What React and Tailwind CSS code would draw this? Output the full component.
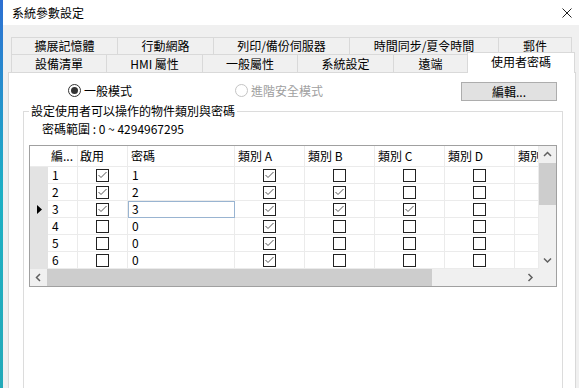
import React from "react";

const backTabs = [
  { label: "擴展記憶體", w: "w-[106px]" },
  { label: "行動網路", w: "w-[96px]" },
  { label: "列印/備份伺服器", w: "w-[136px]" },
  { label: "時間同步/夏令時間", w: "w-[149px]" },
  { label: "郵件", w: "w-[74px] border-r" },
];

const frontTabs = [
  { label: "設備清單", w: "w-[95px]" },
  { label: "HMI 屬性", w: "w-[96px]" },
  { label: "一般屬性", w: "w-[95px]" },
  { label: "系統設定", w: "w-[96px]" },
  { label: "遠端", w: "w-[74px]" },
];

const catCols = [
  { label: "類別 A", w: "w-[70px]" },
  { label: "類別 B", w: "w-[70px]" },
  { label: "類別 C", w: "w-[70px]" },
  { label: "類別 D", w: "w-[70px]" },
  { label: "類別 E", w: "w-[24px]" },
];

const rows = [
  { n: 1, on: true, pw: "1", cats: [true, false, false, false] },
  { n: 2, on: true, pw: "2", cats: [true, true, false, false] },
  { n: 3, on: true, pw: "3", cats: [true, true, true, false], current: true },
  { n: 4, on: false, pw: "0", cats: [true, false, false, false] },
  { n: 5, on: false, pw: "0", cats: [true, false, false, false] },
  { n: 6, on: false, pw: "0", cats: [true, false, false, false] },
];

const CheckBox = ({ checked }) => (
  <div className="w-[13px] h-[13px] border border-[#222222] bg-white flex items-center justify-center">
    {checked && (
      <svg width="11" height="11" viewBox="0 0 11 11">
        <polyline points="1.5,5 4,7.5 9.5,2" fill="none" stroke="#555555" strokeWidth="1" />
      </svg>
    )}
  </div>
);

const Chevron = ({ dir }) => {
  const pts = {
    up: "1,5 4.5,1.5 8,5",
    down: "1,1.5 4.5,5 8,1.5",
    left: "5,1 1.5,4.5 5,8",
    right: "1.5,1 5,4.5 1.5,8",
  }[dir];
  const size = dir === "up" || dir === "down" ? [9, 7] : [7, 9];
  return (
    <svg width={size[0]} height={size[1]} viewBox={`0 0 ${size[0]} ${size[1]}`}>
      <polyline points={pts} fill="none" stroke="#606060" strokeWidth="1.5" />
    </svg>
  );
};

const cell = "h-full border-r border-b border-[#ebebeb] flex items-center";

export default function App() {
  return (
    <div className="flex w-[579px] h-[388px] overflow-hidden bg-[#f0f0f0] text-[12px] leading-[16px] text-black font-['Microsoft_JhengHei','Noto_Sans_CJK_TC',sans-serif]">
      {/* desktop peeking through on the left */}
      <div className="w-[3px] shrink-0 bg-gradient-to-b from-[#2d6fd2] via-[#1fb0c4] to-[#23a9b8]" />

      <div className="flex flex-1 flex-col">
        {/* title bar */}
        <div className="h-[25px] shrink-0 bg-white flex items-center justify-between pl-[9px] pr-[7px]">
          <span>系統參數設定</span>
          <svg width="10" height="10" viewBox="0 0 10 10">
            <path d="M0.5 0.5 L9.5 9.5 M9.5 0.5 L0.5 9.5" stroke="#222" strokeWidth="1" />
          </svg>
        </div>

        {/* tabs */}
        <div className="pt-[12px] shrink-0">
          <div className="flex ml-[8px] h-[17px]">
            {backTabs.map((t) => (
              <div
                key={t.label}
                className={`${t.w} h-full flex items-center justify-center border-t border-l border-[#d9d9d9] bg-[#f0f0f0]`}
              >
                {t.label}
              </div>
            ))}
          </div>
          <div className="flex items-end ml-[8px] h-[18px]">
            {frontTabs.map((t) => (
              <div
                key={t.label}
                className={`${t.w} h-full flex items-center justify-center border-t border-l border-[#d9d9d9] bg-[#f0f0f0]`}
              >
                {t.label}
              </div>
            ))}
            <div className="relative z-10 w-[108px] h-[21px] -mb-px flex items-center justify-center border-t border-l border-r border-[#d9d9d9] bg-white pb-[2px]">
              使用者密碼
            </div>
          </div>
        </div>

        {/* tab page */}
        <div className="ml-[5px] w-[568px] h-[400px] shrink-0 border border-[#d9d9d9] bg-white">
          <div className="flex items-center mt-[9px] h-[19px] ml-[59px] mr-[18px]">
            <div className="flex items-center w-[167px] gap-[3px] -mt-[2px]">
              <div className="w-[13px] h-[13px] rounded-full border border-[#333333] flex items-center justify-center">
                <div className="w-[7px] h-[7px] rounded-full bg-[#333333]" />
              </div>
              <span>一般模式</span>
            </div>
            <div className="flex items-center gap-[3px] -mt-[2px] text-[#a0a0a0]">
              <div className="w-[13px] h-[13px] rounded-full border border-[#c4c4c4]" />
              <span>進階安全模式</span>
            </div>
            <button className="ml-auto w-[96px] h-[19px] bg-[#e1e1e1] border border-[#adadad] flex items-center justify-center">
              編輯...
            </button>
          </div>

          <fieldset className="mt-[2px] ml-[14px] w-[540px] h-[300px] border border-[#dcdcdc] px-[5px]">
            <legend className="px-[2px] leading-[16px]">設定使用者可以操作的物件類別與密碼</legend>
            <div className="mt-[2px] ml-[13px]">密碼範圍 : 0 ~ 4294967295</div>

            {/* data grid */}
            <div className="mt-[8px] w-[528px] border border-[#a0a0a0] flex flex-col">
              <div className="flex">
                <div className="w-[509px] flex flex-col">
                  <div className="flex h-[21px]">
                    <div className="w-[18px] h-full bg-white border-b border-[#ebebeb]" />
                    <div className={`${cell} w-[30px] pl-[3px]`}>編...</div>
                    <div className={`${cell} w-[50px] pl-[2px]`}>啟用</div>
                    <div className={`${cell} w-[107px] pl-[3px]`}>密碼</div>
                    {catCols.map((c) => (
                      <div key={c.label} className={`${cell} ${c.w} pl-[3px] whitespace-nowrap overflow-hidden`}>
                        {c.label}
                      </div>
                    ))}
                  </div>
                  {rows.map((r) => (
                    <div key={r.n} className="flex h-[17px]">
                      <div className="w-[18px] h-full bg-[#e3e3e3] flex items-center justify-center">
                        {r.current && (
                          <svg width="5" height="9" viewBox="0 0 5 9">
                            <polygon points="0,0 5,4.5 0,9" fill="#000" />
                          </svg>
                        )}
                      </div>
                      <div className={`${cell} w-[30px] pl-[4px]`}>{r.n}</div>
                      <div className={`${cell} w-[50px] justify-center`}>
                        <CheckBox checked={r.on} />
                      </div>
                      <div
                        className={`${cell} w-[107px] pl-[4px] ${
                          r.current ? "outline outline-solid outline-[#99b4d1] -outline-offset-1" : ""
                        }`}
                      >
                        {r.pw}
                      </div>
                      {r.cats.map((v, i) => (
                        <div key={i} className={`${cell} w-[70px] justify-center`}>
                          <CheckBox checked={v} />
                        </div>
                      ))}
                      <div className={`${cell} w-[24px]`} />
                    </div>
                  ))}
                </div>

                {/* vertical scrollbar */}
                <div className="w-[17px] h-[123px] flex flex-col bg-[#f0f0f0]">
                  <div className="h-[17px] flex items-center justify-center">
                    <Chevron dir="up" />
                  </div>
                  <div className="h-[42px] bg-[#cdcdcd]" />
                  <div className="flex-1" />
                  <div className="h-[17px] flex items-center justify-center">
                    <Chevron dir="down" />
                  </div>
                </div>
              </div>

              {/* horizontal scrollbar */}
              <div className="flex h-[17px] bg-[#f0f0f0]">
                <div className="w-[17px] flex items-center justify-center">
                  <Chevron dir="left" />
                </div>
                <div className="w-[385px] bg-[#cdcdcd]" />
                <div className="w-[90px]" />
                <div className="w-[17px] flex items-center justify-center">
                  <Chevron dir="right" />
                </div>
                <div className="w-[17px]" />
              </div>
            </div>
          </fieldset>
        </div>
      </div>
    </div>
  );
}
